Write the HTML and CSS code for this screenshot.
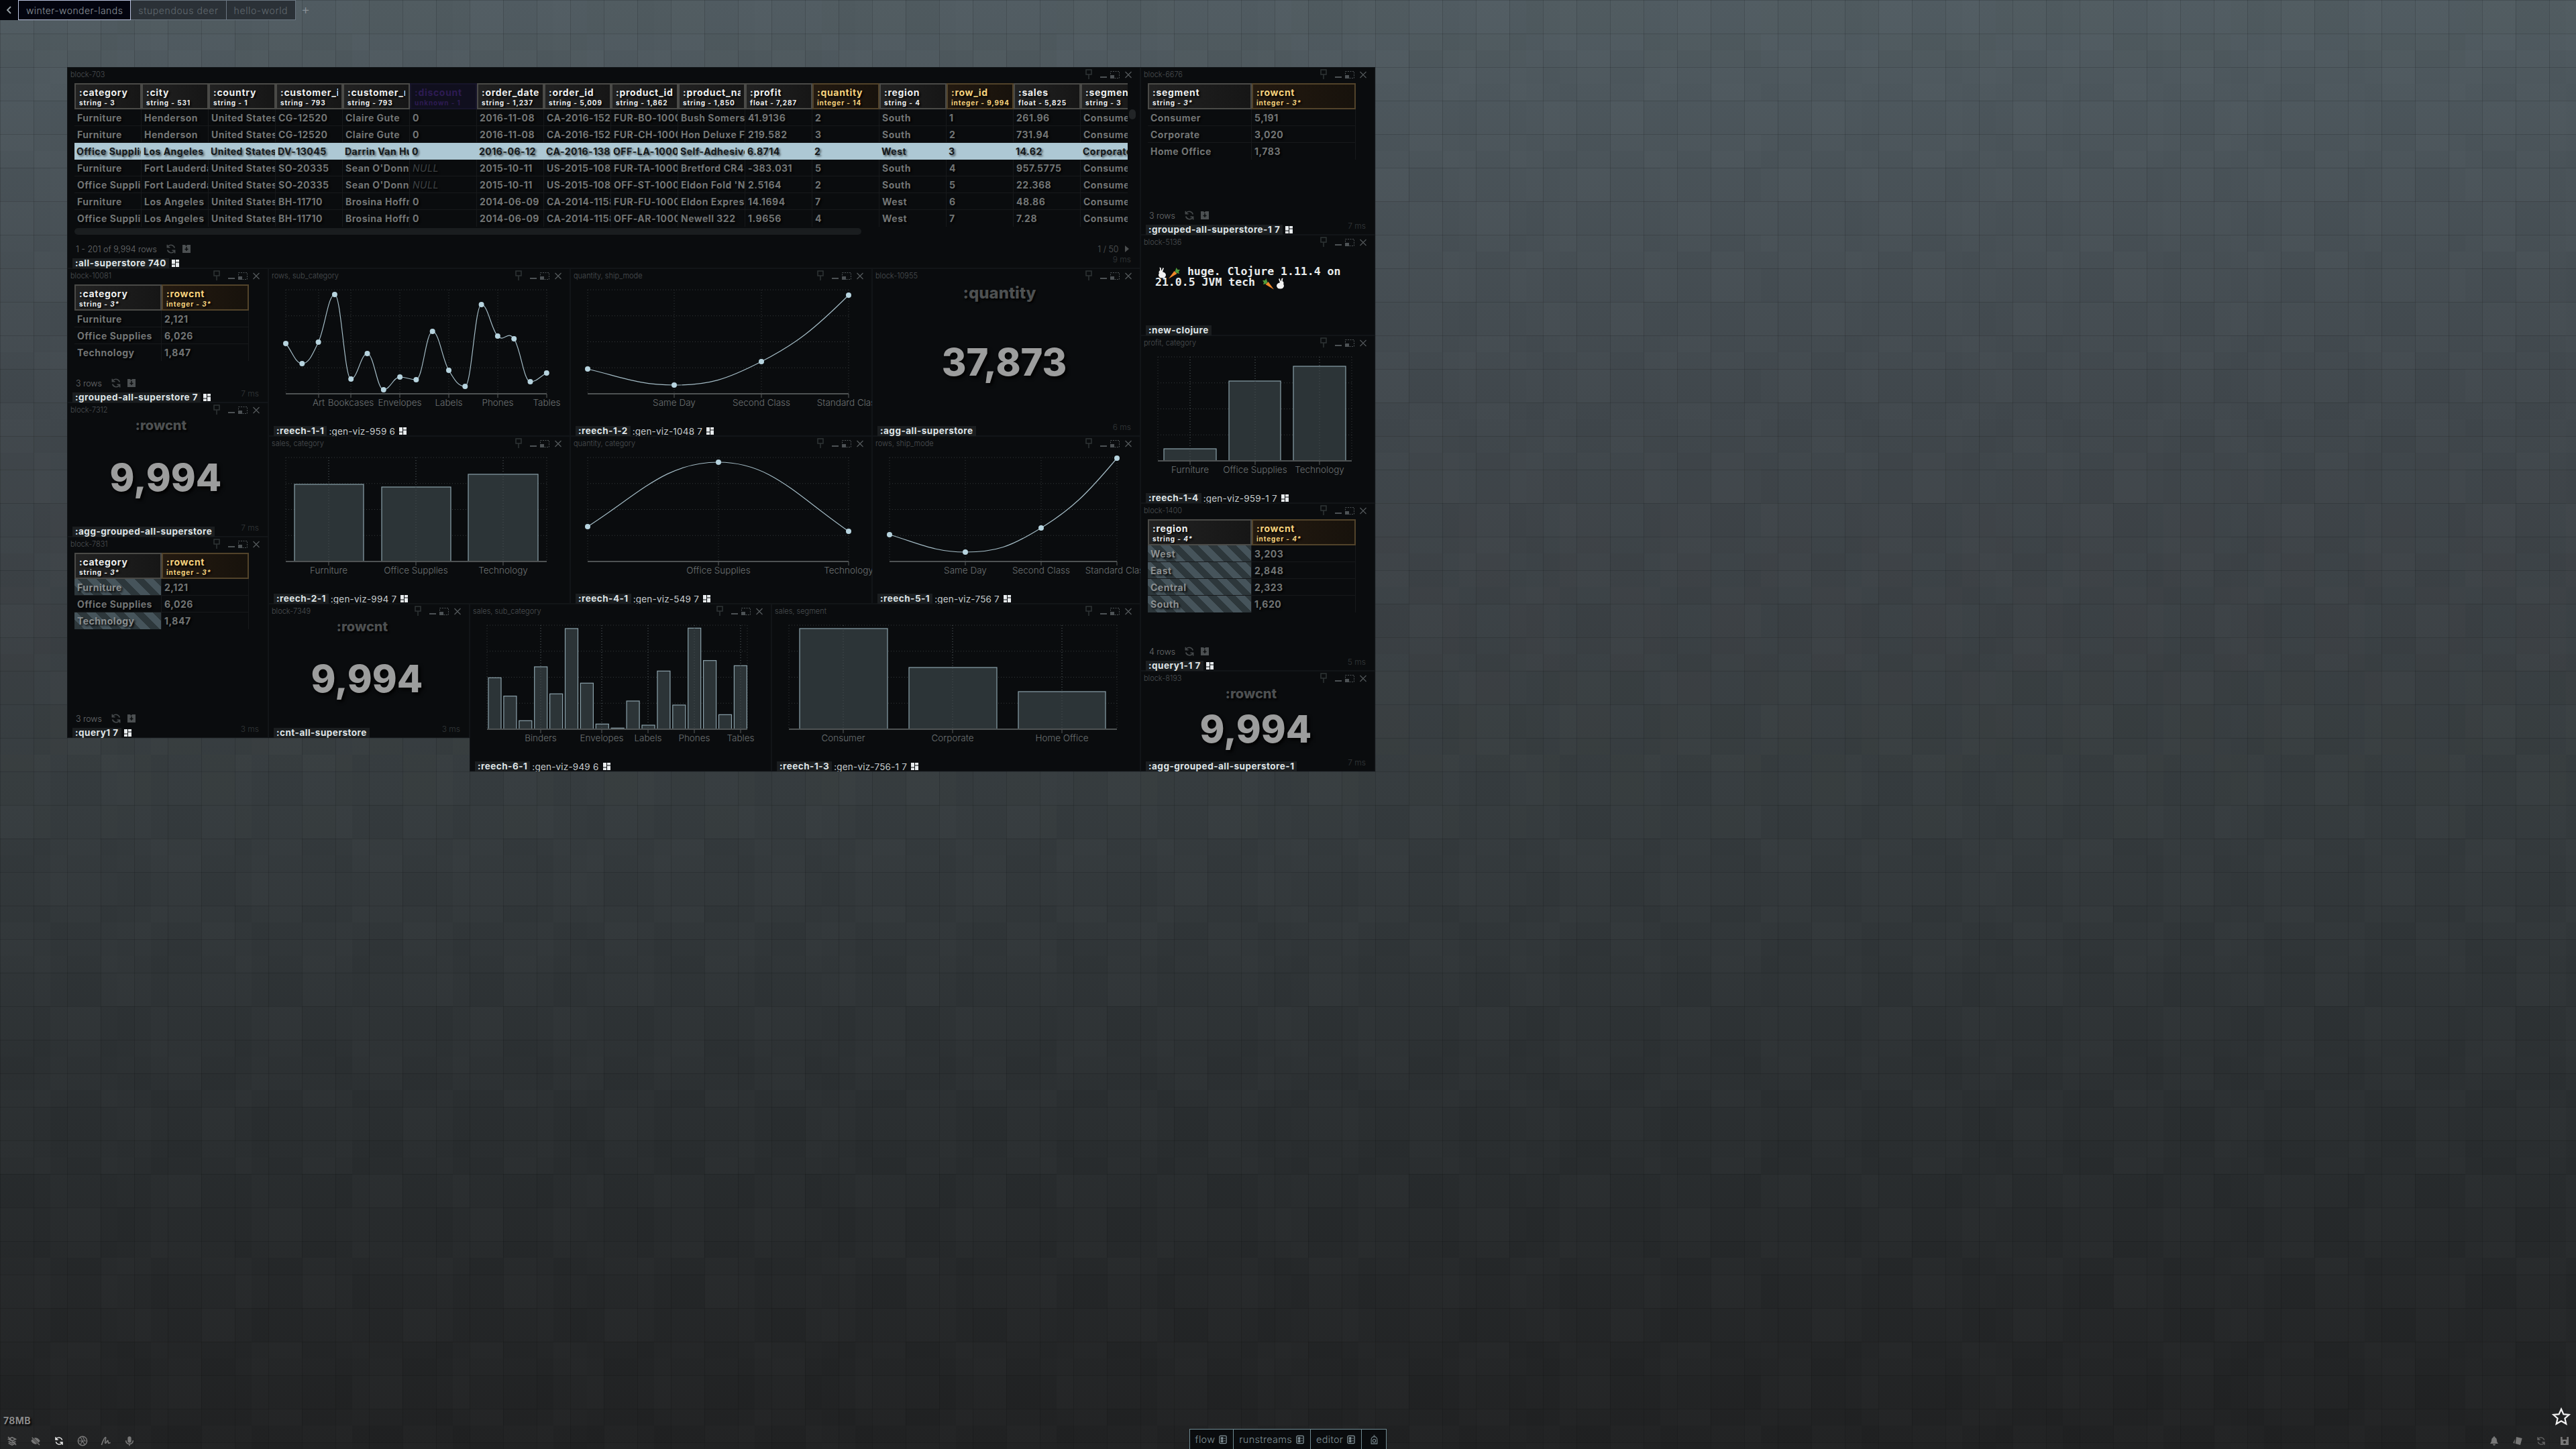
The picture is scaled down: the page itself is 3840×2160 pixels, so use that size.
FILE: index.html
```html
<!DOCTYPE html>
<html>
<head>
<meta charset="utf-8">
<title>winter-wonder-lands</title>
<link rel="stylesheet" href="styles.css">
</head>
<body>

<svg class="defs" width="0" height="0">
    <symbol id="i-win" viewBox="0 0 72 16">
        <path d="M3 1h8v7H3zM7 8v7" fill="none" stroke="#2f3436" stroke-width="1.5"/>
        <rect x="24" y="11" width="10" height="2" fill="#4d5255"/>
        <rect x="39.5" y="3.5" width="13" height="10" fill="none" stroke="#4d5255" stroke-dasharray="2 1.5"/>
        <rect x="39" y="9" width="6" height="5" fill="#4d5255"/>
        <path d="M61.5 4l9 9M70.5 4l-9 9" stroke="#565b5e" stroke-width="1.2"/>
    </symbol>
    <symbol id="i-tile" viewBox="0 0 11 11">
        <path d="M0 0h5v6.5H0zM0 7.5h5V11H0zM6 0h5v3.5H6zM6 4.5h5V11H6z" fill="#e8ecee"/>
    </symbol>
    <symbol id="i-cycle" viewBox="0 0 24 24">
        <path d="M19 10a7.5 7.5 0 0 0-12.5-3.5L4.5 9M5 14a7.5 7.5 0 0 0 12.5 3.5l2-2.5M4.5 3.5V9H10M19.500 20.500V15H14" fill="none" stroke="currentColor" stroke-width="2.200"/>
    </symbol>
    <symbol id="i-save" viewBox="0 0 14 14">
        <path d="M1 1h4l1.500 2L8 1h5v12H1z" fill="currentColor"/>
        <path d="M7 4v6M4.500 7.500h5" stroke="#0a0c0e" stroke-width="1.500"/>
    </symbol>
    <symbol id="i-doc" viewBox="0 0 14 14">
        <rect x="1" y="1" width="11" height="12" rx="1.500" fill="none" stroke="currentColor" stroke-width="1.400"/>
        <path d="M3.500 3.500h3v3h-3zM3.500 8h3v3h-3zM8 5h2.500M8 9h2.500" fill="currentColor" stroke="currentColor"/>
    </symbol>
    <symbol id="i-rabbit" viewBox="0 0 18 18">
        <ellipse cx="10" cy="12" rx="5.500" ry="4.500" fill="#f2f2f2"/>
        <circle cx="8" cy="8" r="3" fill="#f2f2f2"/>
        <path d="M7 6L6 0.500 8 1 9 6zM9 6l2-5 1.500 1L10.500 7z" fill="#f2f2f2"/>
    </symbol>
    <symbol id="i-carrot" viewBox="0 0 18 18">
        <path d="M0.500 17.500L9 6l4 4z" fill="#f0882a"/>
        <path d="M10 7l2-6 2 3 3.500 0-2 3 1 3-4-1z" fill="#4f9a3a"/>
    </symbol>
</svg>

<nav class="tabs">
    <div class="tab-back">
        <svg width="12" height="14" viewBox="0 0 12 14"><path d="M8 2L3 7l5 5" fill="none" stroke="#9aa3a8" stroke-width="1.800"/></svg>
    </div>
    <div class="tab tab-on">winter-wonder-lands</div>
    <div class="tab">stupendous deer</div>
    <div class="tab">hello-world</div>
    <div class="tab-add">+</div>
</nav>

<main class="canvas">

    <section class="block b-703">
        <header class="bar"><span class="name">block-703</span><svg class="win"><use href="#i-win"/></svg></header>
        <div class="wrap-wide">
            <table class="tbl tbl-wide">
                <thead>
                    <tr>
                        <th><div class="h-name">:category</div><div class="h-sub">string - 3</div></th>
                        <th><div class="h-name">:city</div><div class="h-sub">string - 531</div></th>
                        <th><div class="h-name">:country</div><div class="h-sub">string - 1</div></th>
                        <th><div class="h-name">:customer_id</div><div class="h-sub">string - 793</div></th>
                        <th><div class="h-name">:customer_name</div><div class="h-sub">string - 793</div></th>
                        <th class="th-null"><div class="h-name">:discount</div><div class="h-sub">unknown - 1</div></th>
                        <th><div class="h-name">:order_date</div><div class="h-sub">string - 1,237</div></th>
                        <th><div class="h-name">:order_id</div><div class="h-sub">string - 5,009</div></th>
                        <th><div class="h-name">:product_id</div><div class="h-sub">string - 1,862</div></th>
                        <th><div class="h-name">:product_name</div><div class="h-sub">string - 1,850</div></th>
                        <th><div class="h-name">:profit</div><div class="h-sub">float - 7,287</div></th>
                        <th class="th-num"><div class="h-name">:quantity</div><div class="h-sub">integer - 14</div></th>
                        <th><div class="h-name">:region</div><div class="h-sub">string - 4</div></th>
                        <th class="th-num"><div class="h-name">:row_id</div><div class="h-sub">integer - 9,994</div></th>
                        <th><div class="h-name">:sales</div><div class="h-sub">float - 5,825</div></th>
                        <th><div class="h-name">:segment</div><div class="h-sub">string - 3</div></th>
                    </tr>
                </thead>
                <tbody>
                    <tr><td>Furniture</td><td>Henderson</td><td>United States</td><td>CG-12520</td><td>Claire Gute</td><td>0</td><td>2016-11-08</td><td>CA-2016-152156</td><td>FUR-BO-10001798</td><td>Bush Somerset Collection</td><td>41.9136</td><td>2</td><td>South</td><td>1</td><td>261.96</td><td>Consumer</td></tr>
                    <tr><td>Furniture</td><td>Henderson</td><td>United States</td><td>CG-12520</td><td>Claire Gute</td><td>0</td><td>2016-11-08</td><td>CA-2016-152156</td><td>FUR-CH-10000454</td><td>Hon Deluxe Fabric</td><td>219.582</td><td>3</td><td>South</td><td>2</td><td>731.94</td><td>Consumer</td></tr>
                    <tr class="sel"><td>Office Supplies</td><td>Los Angeles</td><td>United States</td><td>DV-13045</td><td>Darrin Van Huff</td><td>0</td><td>2016-06-12</td><td>CA-2016-138688</td><td>OFF-LA-10000240</td><td>Self-Adhesive Address</td><td>6.8714</td><td>2</td><td>West</td><td>3</td><td>14.62</td><td>Corporate</td></tr>
                    <tr><td>Furniture</td><td>Fort Lauderdale</td><td>United States</td><td>SO-20335</td><td>Sean O'Donnell</td><td class="null">NULL</td><td>2015-10-11</td><td>US-2015-108966</td><td>FUR-TA-10000577</td><td>Bretford CR4500</td><td>-383.031</td><td>5</td><td>South</td><td>4</td><td>957.5775</td><td>Consumer</td></tr>
                    <tr><td>Office Supplies</td><td>Fort Lauderdale</td><td>United States</td><td>SO-20335</td><td>Sean O'Donnell</td><td class="null">NULL</td><td>2015-10-11</td><td>US-2015-108966</td><td>OFF-ST-10000760</td><td>Eldon Fold 'N Roll</td><td>2.5164</td><td>2</td><td>South</td><td>5</td><td>22.368</td><td>Consumer</td></tr>
                    <tr><td>Furniture</td><td>Los Angeles</td><td>United States</td><td>BH-11710</td><td>Brosina Hoffman</td><td>0</td><td>2014-06-09</td><td>CA-2014-115812</td><td>FUR-FU-10001487</td><td>Eldon Expressions</td><td>14.1694</td><td>7</td><td>West</td><td>6</td><td>48.86</td><td>Consumer</td></tr>
                    <tr><td>Office Supplies</td><td>Los Angeles</td><td>United States</td><td>BH-11710</td><td>Brosina Hoffman</td><td>0</td><td>2014-06-09</td><td>CA-2014-115812</td><td>OFF-AR-10002833</td><td>Newell 322</td><td>1.9656</td><td>4</td><td>West</td><td>7</td><td>7.28</td><td>Consumer</td></tr>
                </tbody>
            </table>
        </div>
        <div class="vthumb"></div>
        <div class="hscroll"><div class="hthumb"></div></div>
        <div class="rows-line"><span>1 - 201 of 9,994 rows</span><svg class="ico"><use href="#i-cycle"/></svg><svg class="ico-s"><use href="#i-save"/></svg><span class="pager">1 / 50 <i class="arrow"></i></span></div>
        <footer class="foot"><div class="lbl"><span class="key">:all-superstore 740</span><svg class="tile"><use href="#i-tile"/></svg></div><span class="ms">9 ms</span></footer>
    </section>

    <section class="block b-6676">
        <header class="bar"><span class="name">block-6676</span><svg class="win"><use href="#i-win"/></svg></header>
        <table class="tbl tbl-r">
            <thead><tr>
                <th><div class="h-name">:segment</div><div class="h-sub">string - <em>3*</em></div></th>
                <th class="th-num"><div class="h-name">:rowcnt</div><div class="h-sub">integer - <em>3*</em></div></th>
            </tr></thead>
            <tbody>
                <tr><td>Consumer</td><td>5,191</td></tr>
                <tr><td>Corporate</td><td>3,020</td></tr>
                <tr><td>Home Office</td><td>1,783</td></tr>
            </tbody>
        </table>
        <div class="rows-line"><span>3 rows</span><svg class="ico"><use href="#i-cycle"/></svg><svg class="ico-s"><use href="#i-save"/></svg></div>
        <footer class="foot"><div class="lbl"><span class="key">:grouped-all-superstore-1 7</span><svg class="tile"><use href="#i-tile"/></svg></div><span class="ms">7 ms</span></footer>
    </section>

    <section class="block b-5136">
        <header class="bar"><span class="name">block-5136</span><svg class="win"><use href="#i-win"/></svg></header>
        <div class="clj"><svg class="emoji"><use href="#i-rabbit"/></svg><svg class="emoji"><use href="#i-carrot"/></svg> huge. Clojure 1.11.4 on<br>21.0.5 JVM tech <svg class="emoji emoji-flip"><use href="#i-carrot"/></svg><svg class="emoji emoji-flip"><use href="#i-rabbit"/></svg></div>
        <footer class="foot"><div class="lbl"><span class="key">:new-clojure</span></div></footer>
    </section>

    <section class="block b-profit">
        <header class="bar"><span class="name">profit, category</span><svg class="win"><use href="#i-win"/></svg></header>
        <div class="chart" id="c-profit"></div>
        <footer class="foot"><div class="lbl"><span class="key">:reech-1-4</span><span class="gen">:gen-viz-959-1 7</span><svg class="tile"><use href="#i-tile"/></svg></div></footer>
    </section>

    <section class="block b-1400">
        <header class="bar"><span class="name">block-1400</span><svg class="win"><use href="#i-win"/></svg></header>
        <table class="tbl tbl-r">
            <thead><tr>
                <th><div class="h-name">:region</div><div class="h-sub">string - <em>4*</em></div></th>
                <th class="th-num"><div class="h-name">:rowcnt</div><div class="h-sub">integer - <em>4*</em></div></th>
            </tr></thead>
            <tbody>
                <tr><td class="stripe">West</td><td>3,203</td></tr>
                <tr><td class="stripe">East</td><td>2,848</td></tr>
                <tr><td class="stripe">Central</td><td>2,323</td></tr>
                <tr><td class="stripe">South</td><td>1,620</td></tr>
            </tbody>
        </table>
        <div class="rows-line"><span>4 rows</span><svg class="ico"><use href="#i-cycle"/></svg><svg class="ico-s"><use href="#i-save"/></svg></div>
        <footer class="foot"><div class="lbl"><span class="key">:query1-1 7</span><svg class="tile"><use href="#i-tile"/></svg></div><span class="ms">5 ms</span></footer>
    </section>

    <section class="block b-8193">
        <header class="bar"><span class="name">block-8193</span><svg class="win"><use href="#i-win"/></svg></header>
        <div class="metric-name">:rowcnt</div>
        <div class="metric">9,994</div>
        <footer class="foot"><div class="lbl"><span class="key">:agg-grouped-all-superstore-1</span></div><span class="ms">7 ms</span></footer>
    </section>

    <section class="block b-10081">
        <header class="bar"><span class="name">block-10081</span><svg class="win"><use href="#i-win"/></svg></header>
        <table class="tbl tbl-l">
            <thead><tr>
                <th><div class="h-name">:category</div><div class="h-sub">string - <em>3*</em></div></th>
                <th class="th-num"><div class="h-name">:rowcnt</div><div class="h-sub">integer - <em>3*</em></div></th>
            </tr></thead>
            <tbody>
                <tr><td>Furniture</td><td>2,121</td></tr>
                <tr><td>Office Supplies</td><td>6,026</td></tr>
                <tr><td>Technology</td><td>1,847</td></tr>
            </tbody>
        </table>
        <div class="rows-line"><span>3 rows</span><svg class="ico"><use href="#i-cycle"/></svg><svg class="ico-s"><use href="#i-save"/></svg></div>
        <footer class="foot"><div class="lbl"><span class="key">:grouped-all-superstore 7</span><svg class="tile"><use href="#i-tile"/></svg></div><span class="ms">7 ms</span></footer>
    </section>

    <section class="block b-7312">
        <header class="bar"><span class="name">block-7312</span><svg class="win"><use href="#i-win"/></svg></header>
        <div class="metric-name">:rowcnt</div>
        <div class="metric">9,994</div>
        <footer class="foot"><div class="lbl"><span class="key">:agg-grouped-all-superstore</span></div><span class="ms">7 ms</span></footer>
    </section>

    <section class="block b-7831">
        <header class="bar"><span class="name">block-7831</span><svg class="win"><use href="#i-win"/></svg></header>
        <table class="tbl tbl-l">
            <thead><tr>
                <th><div class="h-name">:category</div><div class="h-sub">string - <em>3*</em></div></th>
                <th class="th-num"><div class="h-name">:rowcnt</div><div class="h-sub">integer - <em>3*</em></div></th>
            </tr></thead>
            <tbody>
                <tr><td class="stripe">Furniture</td><td>2,121</td></tr>
                <tr><td>Office Supplies</td><td>6,026</td></tr>
                <tr><td class="stripe">Technology</td><td>1,847</td></tr>
            </tbody>
        </table>
        <div class="rows-line"><span>3 rows</span><svg class="ico"><use href="#i-cycle"/></svg><svg class="ico-s"><use href="#i-save"/></svg></div>
        <footer class="foot"><div class="lbl"><span class="key">:query1 7</span><svg class="tile"><use href="#i-tile"/></svg></div><span class="ms">3 ms</span></footer>
    </section>

    <section class="block b-rows-sub">
        <header class="bar"><span class="name">rows, sub_category</span><svg class="win"><use href="#i-win"/></svg></header>
        <div class="chart" id="c-rows-sub"></div>
        <footer class="foot"><div class="lbl"><span class="key">:reech-1-1</span><span class="gen">:gen-viz-959 6</span><svg class="tile"><use href="#i-tile"/></svg></div></footer>
    </section>

    <section class="block b-qty-ship">
        <header class="bar"><span class="name">quantity, ship_mode</span><svg class="win"><use href="#i-win"/></svg></header>
        <div class="chart" id="c-qty-ship"></div>
        <footer class="foot"><div class="lbl"><span class="key">:reech-1-2</span><span class="gen">:gen-viz-1048 7</span><svg class="tile"><use href="#i-tile"/></svg></div></footer>
    </section>

    <section class="block b-10955">
        <header class="bar"><span class="name">block-10955</span><svg class="win"><use href="#i-win"/></svg></header>
        <div class="metric-name">:quantity</div>
        <div class="metric">37,873</div>
        <footer class="foot"><div class="lbl"><span class="key">:agg-all-superstore</span></div><span class="ms">6 ms</span></footer>
    </section>

    <section class="block b-sales-cat">
        <header class="bar"><span class="name">sales, category</span><svg class="win"><use href="#i-win"/></svg></header>
        <div class="chart" id="c-sales-cat"></div>
        <footer class="foot"><div class="lbl"><span class="key">:reech-2-1</span><span class="gen">:gen-viz-994 7</span><svg class="tile"><use href="#i-tile"/></svg></div></footer>
    </section>

    <section class="block b-qty-cat">
        <header class="bar"><span class="name">quantity, category</span><svg class="win"><use href="#i-win"/></svg></header>
        <div class="chart" id="c-qty-cat"></div>
        <footer class="foot"><div class="lbl"><span class="key">:reech-4-1</span><span class="gen">:gen-viz-549 7</span><svg class="tile"><use href="#i-tile"/></svg></div></footer>
    </section>

    <section class="block b-rows-ship">
        <header class="bar"><span class="name">rows, ship_mode</span><svg class="win"><use href="#i-win"/></svg></header>
        <div class="chart" id="c-rows-ship"></div>
        <footer class="foot"><div class="lbl"><span class="key">:reech-5-1</span><span class="gen">:gen-viz-756 7</span><svg class="tile"><use href="#i-tile"/></svg></div></footer>
    </section>

    <section class="block b-7349">
        <header class="bar"><span class="name">block-7349</span><svg class="win"><use href="#i-win"/></svg></header>
        <div class="metric-name">:rowcnt</div>
        <div class="metric">9,994</div>
        <footer class="foot"><div class="lbl"><span class="key">:cnt-all-superstore</span></div><span class="ms">3 ms</span></footer>
    </section>

    <section class="block b-sales-sub">
        <header class="bar"><span class="name">sales, sub_category</span><svg class="win"><use href="#i-win"/></svg></header>
        <div class="chart" id="c-sales-sub"></div>
        <footer class="foot"><div class="lbl"><span class="key">:reech-6-1</span><span class="gen">:gen-viz-949 6</span><svg class="tile"><use href="#i-tile"/></svg></div></footer>
    </section>

    <section class="block b-sales-seg">
        <header class="bar"><span class="name">sales, segment</span><svg class="win"><use href="#i-win"/></svg></header>
        <div class="chart" id="c-sales-seg"></div>
        <footer class="foot"><div class="lbl"><span class="key">:reech-1-3</span><span class="gen">:gen-viz-756-1 7</span><svg class="tile"><use href="#i-tile"/></svg></div></footer>
    </section>

</main>

<footer class="bottom">
    <div class="bottom-left">
        <div class="mem">78MB</div>
        <div class="tools">
            <svg viewBox="0 0 24 24"><path d="M12 4l8 4-8 4-8-4zM4 13l8 4 8-4M4 17l8 4 8-4M3 3l18 18" fill="none" stroke="#777" stroke-width="2.400"/></svg>
            <svg viewBox="0 0 24 24"><path d="M2 12c4-6 7-7 10-7s6 1 10 7c-4 6-7 7-10 7s-6-1-10-7z" fill="#777"/><path d="M3 3l18 18" stroke="#222" stroke-width="4"/><path d="M4 4l17 17" stroke="#777" stroke-width="2"/></svg>
            <svg class="tool-on" viewBox="0 0 24 24"><use href="#i-cycle"/></svg>
            <svg viewBox="0 0 24 24"><circle cx="12" cy="12" r="10" fill="none" stroke="#777" stroke-width="2.200"/><path d="M12 2l5 10M22 12H11M17 20l-6-9M7 21l5-10M2 12h10M7 3l5 9" stroke="#777" stroke-width="1.800"/></svg>
            <svg viewBox="0 0 24 24"><path d="M2 21C5 13 8 4 11 4c2 0 -3 13 0 13 2 0 3-6 5-6 1.500 0 0 6 2 6 1 0 2-1 4-1" fill="none" stroke="#777" stroke-width="2.500"/></svg>
            <svg viewBox="0 0 24 24"><rect x="8" y="2" width="8" height="14" rx="4" fill="#777"/><path d="M4 11a8 8 0 0 0 16 0M12 19v4" fill="none" stroke="#777" stroke-width="2.400"/></svg>
        </div>
    </div>
    <div class="dock">
        <div class="dock-tab">flow <svg class="dock-ico"><use href="#i-doc"/></svg></div>
        <div class="dock-tab">runstreams <svg class="dock-ico"><use href="#i-doc"/></svg></div>
        <div class="dock-tab">editor <svg class="dock-ico"><use href="#i-doc"/></svg></div>
        <div class="dock-tab dock-last">
            <svg class="dock-ico" viewBox="0 0 14 16"><path d="M2 15V8a5 5 0 0 1 10 0v7zM6 1h2" fill="none" stroke="currentColor" stroke-width="1.200"/><circle cx="7" cy="10" r="2.500" fill="none" stroke="currentColor" stroke-width="1.200"/></svg>
        </div>
    </div>
    <div class="bottom-right">
        <svg viewBox="0 0 24 24"><path d="M12 2a2 2 0 0 1 2 2c3 1 4 4 4 7 0 4 2 5 3 7H3c1-2 3-3 3-7 0-3 1-6 4-7a2 2 0 0 1 2-2zM9 19h6a3 3 0 0 1-6 0z" fill="#777"/></svg>
        <svg viewBox="0 0 24 24"><path d="M9 3l13 3-4 15-11-3z" fill="#777"/><path d="M6 8l-1 10-3-2z" fill="#777"/></svg>
        <svg class="tool-dim" viewBox="0 0 24 24"><use href="#i-cycle"/></svg>
        <svg viewBox="0 0 24 24"><path d="M3 3h18v18H3z" fill="#777"/><path d="M7 3h10v6H7z" fill="#222"/><circle cx="12" cy="15" r="3" fill="#222"/></svg>
    </div>
    <svg class="star" viewBox="0 0 28 28"><path d="M14 2.500l3.400 7.600 8.300.8-6.300 5.500 1.900 8.100L14 20.300l-7.300 4.200 1.900-8.100-6.300-5.500 8.300-.8z" fill="none" stroke="#f4f4f4" stroke-width="2.200"/></svg>
</footer>

<script src="charts.js"></script>
</body>
</html>
```

FILE: styles.css
```css
* {
    box-sizing: border-box;
}

html, body {
    margin: 0;
    height: 2160px;
}

body {
    position: relative;
    overflow: hidden;
    font-family: Inter, "Open Sans", sans-serif;
    background-color: #363c3f;
    background-image:
        conic-gradient(rgba(0,0,0,.022) 25%, transparent 0 50%, rgba(0,0,0,.022) 0 75%, transparent 0),
        conic-gradient(rgba(255,255,255,.006) 25%, transparent 0 50%, rgba(255,255,255,.006) 0 75%, transparent 0),
        conic-gradient(rgba(0,0,0,.016) 25%, transparent 0 50%, rgba(0,0,0,.016) 0 75%, transparent 0),
        linear-gradient(rgba(0,0,0,.14) 1px, transparent 1px),
        linear-gradient(90deg, rgba(0,0,0,.14) 1px, transparent 1px),
        linear-gradient(#525d63 0, #42494e 600px, #363c3f 1200px, #2a2e30 1700px, #212223 2160px);
    background-size: 100px 150px, 150px 250px, 350px 100px, 50px 50px, 50px 50px, 100% 100%;
}

.defs {
    position: absolute;
}

/* top tabs */

.tabs {
    display: flex;
    align-items: stretch;
    height: 30px;
}

.tab-back {
    width: 27px;
    display: flex;
    align-items: center;
    justify-content: center;
    background: #03040a;
}

.tab {
    padding: 0 11px;
    display: flex;
    align-items: center;
    font-size: 14px;
    font-weight: 300;
    letter-spacing: .6px;
    color: #626a70;
    background: #2b3137;
    border: 1px solid #6b7682;
    border-left-width: 0;
}

.tab-on {
    color: #8d959c;
    background: #03040f;
    border: 1px solid #bcc4e0;
    letter-spacing: .45px;
}

.tab-add {
    margin-left: 8px;
    font-size: 20px;
    font-weight: 300;
    line-height: 28px;
    color: #8b9399;
}

/* the block canvas */

.canvas {
    display: grid;
    grid-template-columns: repeat(39, 50px);
    grid-auto-rows: 50px;
    margin: 70px 0 0 100px;
    width: 1950px;
}

.block {
    position: relative;
    display: flex;
    flex-direction: column;
    min-width: 0;
    min-height: 0;
    overflow: hidden;
    background: #0a0c0e;
    box-shadow: inset 0 0 0 1px #121518;
}

.b-703 { grid-column: 1 / span 32; grid-row: 1 / span 6; }
.b-6676 { grid-column: 33 / span 7; grid-row: 1 / span 5; }
.b-5136 { grid-column: 33 / span 7; grid-row: 6 / span 3; }
.b-profit { grid-column: 33 / span 7; grid-row: 9 / span 5; }
.b-1400 { grid-column: 33 / span 7; grid-row: 14 / span 5; }
.b-8193 { grid-column: 33 / span 7; grid-row: 19 / span 3; }
.b-10081 { grid-column: 1 / span 6; grid-row: 7 / span 4; }
.b-7312 { grid-column: 1 / span 6; grid-row: 11 / span 4; }
.b-7831 { grid-column: 1 / span 6; grid-row: 15 / span 6; }
.b-rows-sub { grid-column: 7 / span 9; grid-row: 7 / span 5; }
.b-qty-ship { grid-column: 16 / span 9; grid-row: 7 / span 5; }
.b-10955 { grid-column: 25 / span 8; grid-row: 7 / span 5; }
.b-sales-cat { grid-column: 7 / span 9; grid-row: 12 / span 5; }
.b-qty-cat { grid-column: 16 / span 9; grid-row: 12 / span 5; }
.b-rows-ship { grid-column: 25 / span 8; grid-row: 12 / span 5; }
.b-7349 { grid-column: 7 / span 6; grid-row: 17 / span 4; }
.b-sales-sub { grid-column: 13 / span 9; grid-row: 17 / span 5; }
.b-sales-seg { grid-column: 22 / span 11; grid-row: 17 / span 5; }

.bar {
    flex: none;
    height: 24px;
    display: flex;
    justify-content: space-between;
    padding: 3px 12px 0 5px;
}

.name {
    font-size: 11px;
    line-height: 16px;
    font-weight: 300;
    color: #4a4f52;
}

.win {
    width: 72px;
    height: 16px;
}

/* tables */

.tbl {
    flex: none;
    margin-left: 11px;
    border-collapse: separate;
    border-spacing: 0;
    table-layout: fixed;
}

.tbl-wide { width: 1600px; margin-left: 0; }
.tbl-r { width: 310px; }
.tbl-l { width: 260px; }

.wrap-wide {
    flex: none;
    margin-left: 11px;
    width: 1570px;
    height: 214px;
    overflow: hidden;
}

/* vertical scrollbar thumb over the table edge */
.vthumb {
    position: absolute;
    left: 1583px;
    top: 63px;
    width: 10px;
    height: 15px;
    border-radius: 5px;
    background: #222527;
}

.tbl th {
    height: 39px;
    padding: 0 5px;
    text-align: left;
    overflow: hidden;
    white-space: nowrap;
    background: linear-gradient(90deg, #222 0, #161616 100%);
    border: 2px solid #4a4a47;
    color: #eceeee;
    text-shadow: 2px 2px 3px #000;
}

.h-name {
    overflow: hidden;
    font-size: 14px;
    font-weight: 700;
    line-height: 19px;
    letter-spacing: .7px;
}

.h-sub {
    font-size: 10px;
    font-weight: 700;
    line-height: 13px;
    letter-spacing: .9px;
}

.h-sub em {
    font-style: italic;
}

.tbl .th-num {
    background: linear-gradient(90deg, #241a10 0, #17120c 100%);
    border-color: #52432a;
    color: #f6d27c;
}

.tbl .th-null {
    background: #100f1e;
    border-color: #17152a;
    color: #2d1b52;
    text-shadow: none;
}

.tbl td {
    height: 25px;
    padding: 0 0 0 4px;
    overflow: hidden;
    white-space: nowrap;
    font-size: 14px;
    font-weight: 700;
    letter-spacing: .5px;
    color: #727575;
    text-shadow: 2px 2px 3px #000;
    border-right: 1px solid #17191b;
    border-bottom: 1px solid #17191b;
}

.tbl tr:last-child td {
    border-bottom: 0;
}

.tbl .sel td {
    padding-left: 3px;
    color: #14181a;
    background: #adc8d4;
    border-color: #adc8d4;
    text-shadow: 2px 2px 3px rgba(0,0,0,.6);
}

.tbl .null {
    font-weight: 400;
    font-style: italic;
    color: #3f4345;
}

.tbl .stripe {
    color: #8b8f90;
    background: repeating-linear-gradient(45deg, #2d373b 0 10px, #46545b 10px 20px);
}

.hscroll {
    flex: none;
    margin: 2px 0 0 11px;
    width: 1570px;
    height: 10px;
}

.hthumb {
    width: 1173px;
    height: 10px;
    border-radius: 5px;
    background: #1a1d1f;
}

/* rows line and block label */

.rows-line {
    flex: none;
    margin-top: auto;
    display: flex;
    align-items: center;
    height: 20px;
    margin-bottom: 4px;
    padding: 0 17px 0 13px;
    font-size: 12.400px;
    font-weight: 300;
    color: #6a6d6e;
}

.ico {
    width: 18px;
    height: 18px;
    margin-left: 12px;
    color: #45494b;
}

.ico-s {
    width: 14px;
    height: 14px;
    margin-left: 7px;
    color: #4c5052;
}

.pager {
    margin-left: auto;
    color: #555859;
}

.arrow {
    display: inline-block;
    margin-left: 6px;
    border-left: 6px solid #4c4f50;
    border-top: 5px solid transparent;
    border-bottom: 5px solid transparent;
}

.foot {
    flex: none;
    height: 15px;
    display: flex;
    justify-content: space-between;
    padding: 0 14px 0 8px;
}

.lbl {
    display: flex;
    align-items: center;
    white-space: nowrap;
}

.key {
    padding: 0 4px;
    height: 15px;
    line-height: 15px;
    font-size: 13.500px;
    font-weight: 700;
    letter-spacing: .5px;
    color: #dfe4e6;
    background: #1b1e20;
}

.gen {
    margin-left: 3px;
    font-size: 13.500px;
    font-weight: 400;
    letter-spacing: .2px;
    color: #c8ccce;
}

.tile {
    width: 11px;
    height: 11px;
    margin-left: 4px;
}

.gen + .tile {
    margin-left: 6px;
}

.ms {
    margin-top: -6px;
    font-size: 12px;
    font-weight: 300;
    color: #34383a;
}

/* metric blocks */

.metric-name {
    flex: none;
    padding-right: 20px;
    text-align: center;
    font-size: 20px;
    line-height: 20px;
    font-weight: 800;
    color: #4d5051;
    text-shadow: 2px 2px 3px #000;
}

.b-10955 .metric-name {
    font-size: 24px;
    line-height: 26px;
}

.metric {
    flex: 1;
    display: flex;
    align-items: center;
    justify-content: center;
    padding: 0 6px 6px 0;
    font-size: 56px;
    font-weight: 800;
    color: #9c9d9d;
    text-shadow: 3px 3px 5px #000;
}

/* clojure greeting */

.clj {
    flex: 1;
    padding: 23px 0 0 22px;
    font-family: "DejaVu Sans Mono", "Liberation Mono", monospace;
    font-size: 16.500px;
    font-weight: 700;
    line-height: 15px;
    color: #e9ecec;
}

.emoji {
    width: 19px;
    height: 18px;
    margin: -3px 0;
    vertical-align: -3px;
}

.emoji-flip {
    transform: scaleX(-1);
}

/* charts */

.chart {
    flex: 1;
    min-height: 0;
    overflow: hidden;
}

.chart svg {
    display: block;
}

.ax-label {
    font-family: Inter, "Open Sans", sans-serif;
    font-size: 13.500px;
    font-weight: 300;
    fill: #6d7273;
}

/* bottom bar */

.bottom {
    position: absolute;
    left: 0;
    right: 0;
    bottom: 0;
    height: 60px;
    display: grid;
    grid-template-columns: 1fr auto 1fr;
    align-items: end;
}

.bottom-left {
    padding: 0 0 4px 5px;
}

.mem {
    font-size: 14px;
    font-weight: 700;
    letter-spacing: .4px;
    color: #8a8a8a;
    text-shadow: 2px 2px 3px #000;
    margin-bottom: 14px;
}

.tools {
    display: flex;
    gap: 19px;
    padding-left: 5px;
}

.tools svg, .bottom-right svg {
    width: 16px;
    height: 16px;
    flex: none;
}

.tool-on {
    color: #f2f2f2;
}

.dock {
    display: flex;
    height: 30px;
}

.dock-tab {
    display: flex;
    align-items: center;
    gap: 6px;
    padding: 0 8px;
    font-size: 14.500px;
    font-weight: 300;
    letter-spacing: .3px;
    color: #7f8f95;
    background: #0a0c0e;
    border: 1px solid #6f8a92;
    border-bottom: 0;
    border-left-width: 0;
}

.dock-tab:first-child {
    border-left-width: 1px;
}

.dock-last {
    width: 37px;
    justify-content: center;
}

.dock-ico {
    width: 13px;
    height: 14px;
}

.bottom-right {
    display: flex;
    justify-content: flex-end;
    gap: 19px;
    padding: 0 9px 4px 0;
}

.tool-dim {
    color: #666;
}

.star {
    position: absolute;
    right: 8px;
    top: -2px;
    width: 28px;
    height: 28px;
}
```

FILE: charts.js
```js
// draws the chart blocks, coordinates are page pixels as in the dashboard layout
const NS = 'http://www.w3.org/2000/svg';

function el(parent, tag, attrs, text) {
    const node = document.createElementNS(NS, tag);
    for (const k in attrs) node.setAttribute(k, attrs[k]);
    if (text) node.textContent = text;
    parent.appendChild(node);
    return node;
}

function smooth(points) {
    let d = 'M' + points[0].join(' ');
    const n = points.length;
    const slope = points.map(function (p, i) {
        const a = points[i - 1], b = points[i + 1];
        if (!a) return (b[1] - p[1]) / (b[0] - p[0]);
        if (!b) return (p[1] - a[1]) / (p[0] - a[0]);
        if ((p[1] - a[1]) * (b[1] - p[1]) <= 0) return 0;
        return (b[1] - a[1]) / (b[0] - a[0]);
    });
    if (n <= 4) {
        slope[0] *= 1.3;
        slope[n - 1] *= 1.3;
    }
    for (let i = 0; i < n - 1; i++) {
        const p = points[i], q = points[i + 1], dx = (q[0] - p[0]) * 0.4;
        d += ' C' + (p[0] + dx) + ' ' + (p[1] + slope[i] * dx) + ' ' +
            (q[0] - dx) + ' ' + (q[1] - slope[i + 1] * dx) + ' ' + q[0] + ' ' + q[1];
    }
    return d;
}

function draw(c) {
    const host = document.getElementById(c.id);
    const top = c.oy + 24, h = host.clientHeight, w = host.clientWidth;
    const svg = el(host, 'svg', {
        width: w, height: h, viewBox: c.ox + ' ' + top + ' ' + w + ' ' + h
    });

    const grid = { stroke: '#34393b', 'stroke-width': 1, 'stroke-dasharray': '1 3' };
    for (let i = 0; i < 4; i++) {
        const y = c.y0 + (c.y1 - c.y0) * i / 4;
        el(svg, 'line', Object.assign({ x1: c.x0, x2: c.x1, y1: y, y2: y }, grid));
    }
    c.vx.concat([c.x0, c.x1]).forEach(function (x) {
        el(svg, 'line', Object.assign({ x1: x, x2: x, y1: c.y0, y2: c.y1 }, grid));
    });

    if (c.bars) {
        c.bars.forEach(function (b) {
            el(svg, 'rect', {
                x: b[0], y: b[2], width: b[1] - b[0], height: c.y1 - b[2],
                fill: '#2c3437', stroke: '#8ba2ab', 'stroke-width': 1.2
            });
        });
        // grid shows through the bars
        c.vx.forEach(function (x) {
            el(svg, 'line', Object.assign({ x1: x, x2: x, y1: c.y0, y2: c.y1 }, grid, { stroke: '#485054' }));
        });
    }

    el(svg, 'line', { x1: c.x0, x2: c.x1, y1: c.y1, y2: c.y1, stroke: '#4e5253', 'stroke-width': 2 });
    c.ticks.forEach(function (t) {
        el(svg, 'line', { x1: t[0], x2: t[0], y1: c.y1, y2: c.y1 + 6, stroke: '#5a5e5f' });
        el(svg, 'text', { x: t[0], y: c.y1 + 18, 'text-anchor': 'middle', class: 'ax-label' }, t[1]);
    });

    if (c.line) {
        el(svg, 'path', { d: smooth(c.line), fill: 'none', stroke: '#a4bcc6', 'stroke-width': 1.200 });
        c.line.forEach(function (p) {
            el(svg, 'circle', { cx: p[0], cy: p[1], r: 4, fill: '#b7d4df' });
        });
    }
}

const subY = [512, 542, 510, 439, 565, 527, 581, 562, 566, 494, 552, 576, 454, 501, 505, 569, 556];
const subTops = [361, 443, 553, 312, 433, 141, 385, 568, 586, 465, 573, 331, 483, 139, 284, 526, 307];

const charts = [
    {
        id: 'c-rows-sub', ox: 400, oy: 400, x0: 426, x1: 815, y0: 432, y1: 587,
        vx: [475, 523, 596, 669, 742],
        ticks: [[475, 'Art'], [523, 'Bookcases'], [596, 'Envelopes'], [669, 'Labels'], [742, 'Phones'], [815, 'Tables']],
        line: subY.map(function (y, i) { return [426 + i * 24.3, y]; })
    },
    {
        id: 'c-qty-ship', ox: 850, oy: 400, x0: 876, x1: 1265, y0: 432, y1: 587,
        vx: [1005, 1135],
        ticks: [[1005, 'Same Day'], [1135, 'Second Class'], [1265, 'Standard Class']],
        line: [[876, 550], [1005, 574], [1135, 539], [1265, 440]]
    },
    {
        id: 'c-sales-cat', ox: 400, oy: 650, x0: 426, x1: 815, y0: 682, y1: 837,
        vx: [490, 620, 750],
        ticks: [[490, 'Furniture'], [620, 'Office Supplies'], [750, 'Technology']],
        bars: [[439, 542, 722], [569, 672, 726], [698, 802, 707]]
    },
    {
        id: 'c-qty-cat', ox: 850, oy: 650, x0: 876, x1: 1265, y0: 682, y1: 837,
        vx: [1071],
        ticks: [[1071, 'Office Supplies'], [1265, 'Technology']],
        line: [[876, 785], [1071, 689], [1265, 792]]
    },
    {
        id: 'c-rows-ship', ox: 1300, oy: 650, x0: 1326, x1: 1665, y0: 682, y1: 837,
        vx: [1439, 1552],
        ticks: [[1439, 'Same Day'], [1552, 'Second Class'], [1665, 'Standard Class']],
        line: [[1326, 797], [1439, 823], [1552, 787], [1665, 683]]
    },
    {
        id: 'c-sales-sub', ox: 700, oy: 900, x0: 726, x1: 1114, y0: 932, y1: 1087,
        vx: [806, 897, 966, 1035, 1104],
        ticks: [[806, 'Binders'], [897, 'Envelopes'], [966, 'Labels'], [1035, 'Phones'], [1104, 'Tables']],
        bars: subTops.map(function (t, i) {
            const x = 728 + i * 22.9;
            return [x, x + 19, 890 + t / 3];
        })
    },
    {
        id: 'c-sales-seg', ox: 1150, oy: 900, x0: 1176, x1: 1665, y0: 932, y1: 1087,
        vx: [1257, 1420, 1583],
        ticks: [[1257, 'Consumer'], [1420, 'Corporate'], [1583, 'Home Office']],
        bars: [[1192, 1323, 937], [1355, 1486, 995], [1518, 1648, 1031]]
    },
    {
        id: 'c-profit', ox: 1700, oy: 500, x0: 1726, x1: 2015, y0: 532, y1: 687,
        vx: [1774, 1871, 1967],
        ticks: [[1774, 'Furniture'], [1871, 'Office Supplies'], [1967, 'Technology']],
        bars: [[1735, 1813, 669], [1832, 1909, 568], [1928, 2006, 546]]
    }
];

charts.forEach(draw);
```
